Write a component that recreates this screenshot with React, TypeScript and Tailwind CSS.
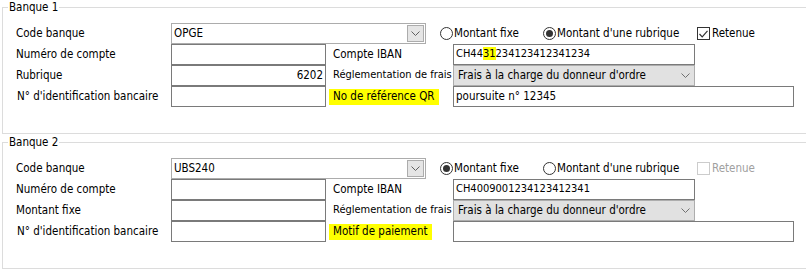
import React from "react"

const Chevron = ({ color = "#606060" }: { color?: string }) => (
  <svg width="9" height="5" viewBox="0 0 9 5" className="block">
    <polyline points="0.5,0.5 4.5,4.5 8.5,0.5" fill="none" stroke={color} strokeWidth="1" />
  </svg>
)

const Radio = ({ checked, label }: { checked?: boolean; label: string }) => (
  <div className="flex items-center gap-[1px] whitespace-nowrap">
    <span className="w-[13px] h-[13px] rounded-full border border-[#333] bg-white flex items-center justify-center">
      {checked && <span className="w-[7px] h-[7px] rounded-full bg-[#333]" />}
    </span>
    <span>{label}</span>
  </div>
)

const Check = ({ checked, disabled, label }: { checked?: boolean; disabled?: boolean; label: string }) => (
  <div className={"flex items-center gap-[2px] whitespace-nowrap " + (disabled ? "text-[#a0a0a0]" : "")}>
    <span
      className={
        "w-[13px] h-[13px] border bg-white flex items-center justify-center " +
        (disabled ? "border-[#cccccc]" : "border-[#333]")
      }
    >
      {checked && (
        <svg width="9" height="8" viewBox="0 0 9 8">
          <polyline points="0.5,4 3.2,6.8 8.5,0.8" fill="none" stroke="#333" strokeWidth="1.2" />
        </svg>
      )}
    </span>
    <span>{label}</span>
  </div>
)

const TextBox = ({ children, className = "" }: { children?: React.ReactNode; className?: string }) => (
  <div className={"h-[21px] border border-[#7a7a7a] bg-white flex items-center px-[2px] whitespace-nowrap " + className}>
    {children}
  </div>
)

type Bank = {
  title: string
  code: string
  fixed: boolean
  retenue: boolean
  retenueDisabled?: boolean
  row3: string
  rubrique: string
  iban: React.ReactNode
  lastLabel: string
  lastValue: string
}

const BankGroup = ({ b }: { b: Bank }) => (
  <fieldset className="border border-[#dcdcdc] ml-[2px] w-[810px] pl-[13px] pt-[9px] pb-[26px]">
    <legend className="ml-[-8px] px-[1px] leading-[14px]">{b.title}</legend>
    <div className="grid grid-cols-[155px_155px_7px_120px_242px_99px] auto-rows-[21px] items-center whitespace-nowrap">
      <div>Code banque</div>
      <div className="col-span-5 flex items-center">
        <div className="w-[255px] h-[21px] border border-[#acacac] bg-white flex items-center justify-between pl-[2px] pr-[1px]">
          <span>{b.code}</span>
          <span className="w-[17px] h-[17px] border border-[#acacac] bg-[#e5e5e5] flex items-center justify-center">
            <Chevron />
          </span>
        </div>
        <div className="ml-[14px] w-[103px]">
          <Radio checked={b.fixed} label="Montant fixe" />
        </div>
        <div className="w-[154px]">
          <Radio checked={!b.fixed} label="Montant d'une rubrique" />
        </div>
        <Check checked={b.retenue} disabled={b.retenueDisabled} label="Retenue" />
      </div>

      <div>Numéro de compte</div>
      <TextBox />
      <div />
      <div>Compte IBAN</div>
      <TextBox className="text-[11px]">{b.iban}</TextBox>
      <div />

      <div>{b.row3}</div>
      <TextBox className="justify-end">{b.rubrique}</TextBox>
      <div />
      <div className="text-[11px]">Réglementation de frais</div>
      <div className="h-[21px] border border-[#adadad] bg-[#e1e1e1] flex items-center justify-between pl-[4px] pr-[4px]">
        <span>Frais à la charge du donneur d'ordre</span>
        <Chevron color="#707070" />
      </div>
      <div />

      <div className="pl-[1px]">N° d'identification bancaire</div>
      <TextBox />
      <div />
      <div className="flex">
        <span className="bg-[#ffff00] h-[16px] flex items-center pl-[4px] pr-[4px] ml-[-4px]">{b.lastLabel}</span>
      </div>
      <TextBox className="col-span-2 w-[341px]">{b.lastValue}</TextBox>
    </div>
  </fieldset>
)

const banks: Bank[] = [
  {
    title: "Banque 1",
    code: "OPGE",
    fixed: false,
    retenue: true,
    row3: "Rubrique",
    rubrique: "6202",
    iban: (
      <span>
        CH44<span className="bg-[#ffff00]">31</span>234123412341234
      </span>
    ),
    lastLabel: "No de référence QR",
    lastValue: "poursuite n° 12345",
  },
  {
    title: "Banque 2",
    code: "UBS240",
    fixed: true,
    retenue: false,
    retenueDisabled: true,
    row3: "Montant fixe",
    rubrique: "",
    iban: "CH4009001234123412341",
    lastLabel: "Motif de paiement",
    lastValue: "",
  },
]

export default function App() {
  return (
    <div
      className="w-[806px] h-[271px] overflow-hidden bg-white text-[11.5px] text-black flex flex-col gap-[1px]"
      style={{ fontFamily: '"DejaVu Sans Condensed", "Liberation Sans", Arial, sans-serif' }}
    >
      {banks.map((b) => (
        <BankGroup key={b.title} b={b} />
      ))}
    </div>
  )
}
